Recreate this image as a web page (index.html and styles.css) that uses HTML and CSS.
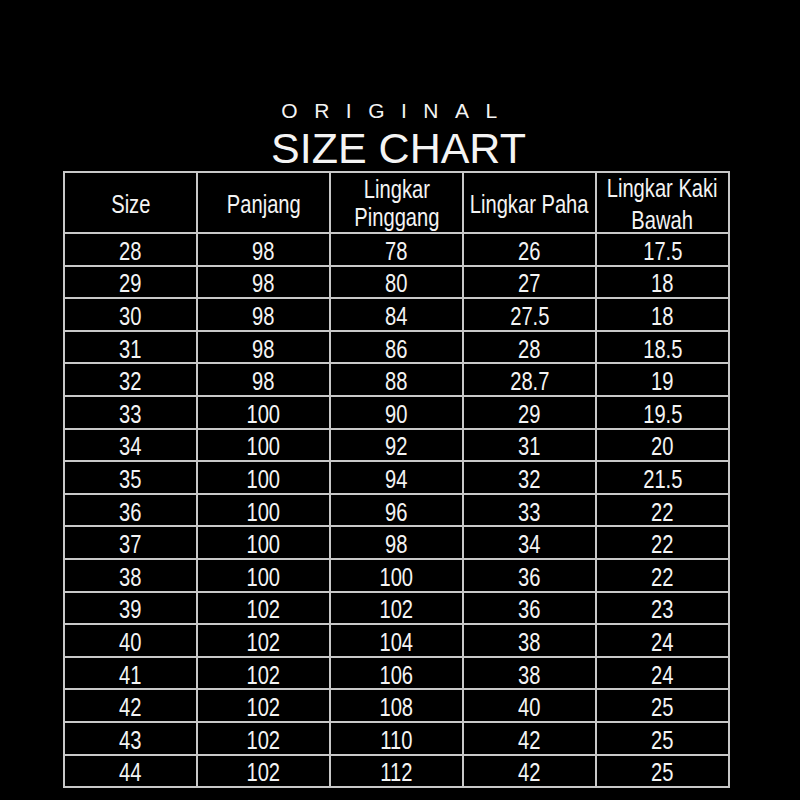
FILE: index.html
```html
<!DOCTYPE html>
<html>
<head>
<meta charset="utf-8">
<link rel="stylesheet" href="styles.css">
</head>
<body>
<div class="page">
  <div class="eyebrow">ORIGINAL</div>
  <div class="title">SIZE CHART</div>
  <div class="chart">
    <div class="cell hdr"><span>Size</span></div>
    <div class="cell hdr"><span>Panjang</span></div>
    <div class="cell hdr two-a"><span>Lingkar<br>Pinggang</span></div>
    <div class="cell hdr"><span>Lingkar Paha</span></div>
    <div class="cell hdr two-b"><span>Lingkar Kaki<br>Bawah</span></div>

    <div class="cell"><span>28</span></div><div class="cell"><span>98</span></div><div class="cell"><span>78</span></div><div class="cell"><span>26</span></div><div class="cell"><span>17.5</span></div>
    <div class="cell"><span>29</span></div><div class="cell"><span>98</span></div><div class="cell"><span>80</span></div><div class="cell"><span>27</span></div><div class="cell"><span>18</span></div>
    <div class="cell"><span>30</span></div><div class="cell"><span>98</span></div><div class="cell"><span>84</span></div><div class="cell"><span>27.5</span></div><div class="cell"><span>18</span></div>
    <div class="cell"><span>31</span></div><div class="cell"><span>98</span></div><div class="cell"><span>86</span></div><div class="cell"><span>28</span></div><div class="cell"><span>18.5</span></div>
    <div class="cell"><span>32</span></div><div class="cell"><span>98</span></div><div class="cell"><span>88</span></div><div class="cell"><span>28.7</span></div><div class="cell"><span>19</span></div>
    <div class="cell"><span>33</span></div><div class="cell"><span>100</span></div><div class="cell"><span>90</span></div><div class="cell"><span>29</span></div><div class="cell"><span>19.5</span></div>
    <div class="cell"><span>34</span></div><div class="cell"><span>100</span></div><div class="cell"><span>92</span></div><div class="cell"><span>31</span></div><div class="cell"><span>20</span></div>
    <div class="cell"><span>35</span></div><div class="cell"><span>100</span></div><div class="cell"><span>94</span></div><div class="cell"><span>32</span></div><div class="cell"><span>21.5</span></div>
    <div class="cell"><span>36</span></div><div class="cell"><span>100</span></div><div class="cell"><span>96</span></div><div class="cell"><span>33</span></div><div class="cell"><span>22</span></div>
    <div class="cell"><span>37</span></div><div class="cell"><span>100</span></div><div class="cell"><span>98</span></div><div class="cell"><span>34</span></div><div class="cell"><span>22</span></div>
    <div class="cell"><span>38</span></div><div class="cell"><span>100</span></div><div class="cell"><span>100</span></div><div class="cell"><span>36</span></div><div class="cell"><span>22</span></div>
    <div class="cell"><span>39</span></div><div class="cell"><span>102</span></div><div class="cell"><span>102</span></div><div class="cell"><span>36</span></div><div class="cell"><span>23</span></div>
    <div class="cell"><span>40</span></div><div class="cell"><span>102</span></div><div class="cell"><span>104</span></div><div class="cell"><span>38</span></div><div class="cell"><span>24</span></div>
    <div class="cell"><span>41</span></div><div class="cell"><span>102</span></div><div class="cell"><span>106</span></div><div class="cell"><span>38</span></div><div class="cell"><span>24</span></div>
    <div class="cell"><span>42</span></div><div class="cell"><span>102</span></div><div class="cell"><span>108</span></div><div class="cell"><span>40</span></div><div class="cell"><span>25</span></div>
    <div class="cell"><span>43</span></div><div class="cell"><span>102</span></div><div class="cell"><span>110</span></div><div class="cell"><span>42</span></div><div class="cell"><span>25</span></div>
    <div class="cell"><span>44</span></div><div class="cell"><span>102</span></div><div class="cell"><span>112</span></div><div class="cell"><span>42</span></div><div class="cell"><span>25</span></div>
  </div>
</div>
</body>
</html>
```

FILE: styles.css
```css
html, body {
  margin: 0;
  padding: 0;
  background: #000;
}
body {
  width: 800px;
  height: 800px;
  overflow: hidden;
  font-family: "Liberation Sans", Arial, sans-serif;
  color: #f4f4f4;
}
.page {
  width: 667px;
  margin-left: 63px;
  padding-top: 99px;
  display: flex;
  flex-direction: column;
  align-items: center;
}
.eyebrow {
  font-size: 21px;
  line-height: 24px;
  letter-spacing: 16.5px;
  padding-left: 2px;
}
.title {
  font-size: 43px;
  line-height: 44px;
  margin-top: 3px;
  margin-bottom: 1px;
  padding-left: 4px;
}
.chart {
  display: grid;
  grid-template-columns: repeat(5, 131px);
  grid-template-rows: 59px repeat(17, 30.6px);
  gap: 2px;
  padding: 2px;
  background: #c8c8c8;
}
.cell {
  background: #000;
  display: flex;
  align-items: center;
  justify-content: center;
  font-size: 25.5px;
  line-height: 28px;
  text-align: center;
  white-space: nowrap;
  padding-top: 3px;
}
.cell span {
  display: inline-block;
  transform: scaleX(0.79);
}
.hdr {
  padding-top: 3px;
}
.two-a {
  padding-top: 0;
  line-height: 28px;
}
.two-b {
  padding-top: 3px;
  line-height: 32px;
}
```
